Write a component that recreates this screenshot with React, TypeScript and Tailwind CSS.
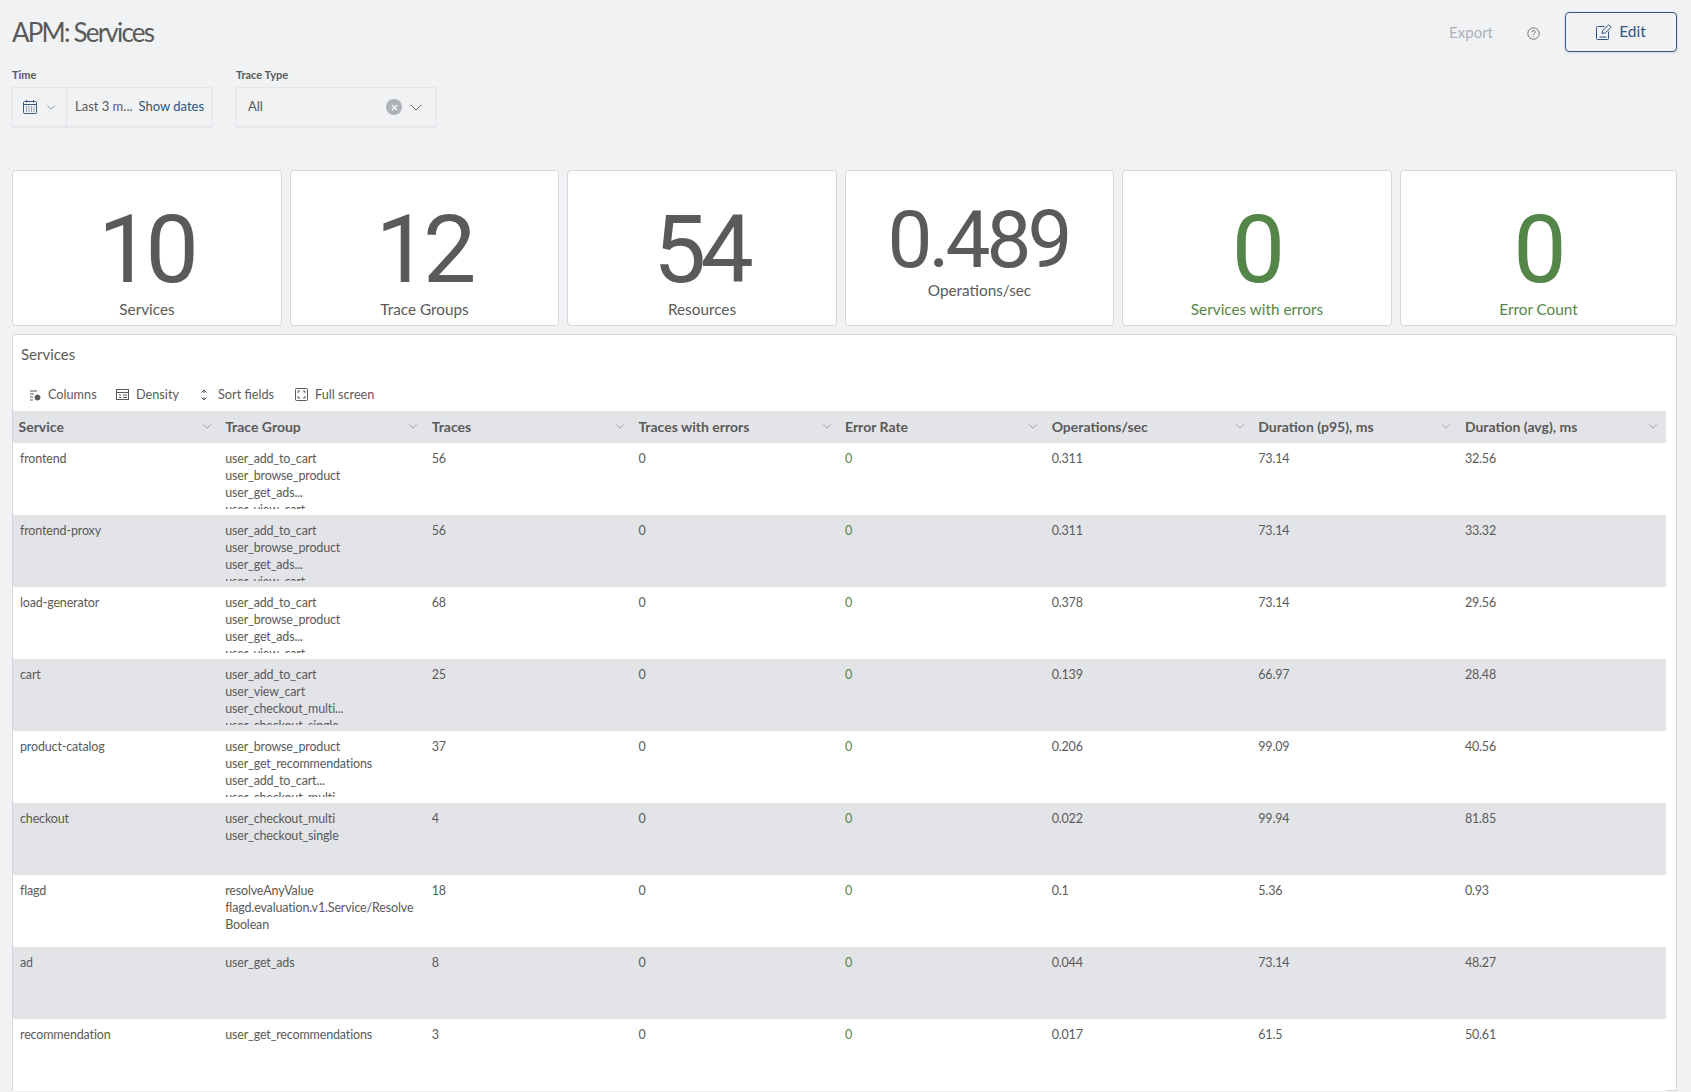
const font = "font-['Lato','Noto_Sans',sans-serif]"

const stats = [
  { value: '10', label: 'Services' },
  { value: '12', label: 'Trace Groups' },
  { value: '54', label: 'Resources' },
  { value: '0.489', label: 'Operations/sec', small: true },
  { value: '0', label: 'Services with errors', green: true },
  { value: '0', label: 'Error Count', green: true },
]

const columns = ['Service', 'Trace Group', 'Traces', 'Traces with errors', 'Error Rate', 'Operations/sec', 'Duration (p95), ms', 'Duration (avg), ms']

const rows = [
  ['frontend', ['user_add_to_cart', 'user_browse_product', 'user_get_ads...', 'user_view_cart'], '56', '0.311', '73.14', '32.56'],
  ['frontend-proxy', ['user_add_to_cart', 'user_browse_product', 'user_get_ads...', 'user_view_cart'], '56', '0.311', '73.14', '33.32'],
  ['load-generator', ['user_add_to_cart', 'user_browse_product', 'user_get_ads...', 'user_view_cart'], '68', '0.378', '73.14', '29.56'],
  ['cart', ['user_add_to_cart', 'user_view_cart', 'user_checkout_multi...', 'user_checkout_single'], '25', '0.139', '66.97', '28.48'],
  ['product-catalog', ['user_browse_product', 'user_get_recommendations', 'user_add_to_cart...', 'user_checkout_multi'], '37', '0.206', '99.09', '40.56'],
  ['checkout', ['user_checkout_multi', 'user_checkout_single'], '4', '0.022', '99.94', '81.85'],
  ['flagd', ['resolveAnyValue', 'flagd.evaluation.v1.Service/Resolve', 'Boolean'], '18', '0.1', '5.36', '0.93'],
  ['ad', ['user_get_ads'], '8', '0.044', '73.14', '48.27'],
  ['recommendation', ['user_get_recommendations'], '3', '0.017', '61.5', '50.61'],
] as const

function Chevron({ className }: { className: string }) {
  return (
    <svg viewBox="0 0 16 16" fill="none" stroke="currentColor" strokeWidth="1" className={className}>
      <path d="M2 5.5l6 6 6-6" />
    </svg>
  )
}

function Header() {
  return (
    <div className="flex items-start justify-between h-[127px]">
      <div>
        <h1 className="text-[26px] leading-[32px] mt-[16px] text-[#5a5a5a] tracking-[-1.8px]">APM: Services</h1>
        <div className="flex gap-[24px] mt-[20px]">
          <div>
            <div className="text-[11px] leading-[14px] font-bold text-[#5a5a5a] mb-[5px]">Time</div>
            <div className="flex items-center w-[200px] h-[40px] border border-[#e3e5ea] shadow-[0_1px_2px_rgba(0,0,0,0.06)] text-[13px]">
              <div className="flex items-center gap-[8px] h-full w-[54px] pl-[9px] border-r border-[#e3e5ea] text-[#3c5a80]">
                <svg viewBox="0 0 16 16" fill="none" stroke="currentColor" strokeWidth="1" className="w-[16px] h-[16px]">
                  <rect x="1.5" y="2.5" width="13" height="12" rx="1" />
                  <path d="M1.5 5.5h13M4.5 1v2.500M11.500 1v2.500" />
                  <path d="M4 8h1M6.500 8h1M9 8h1M11.500 8h1M4 10h1M6.500 10h1M9 10h1M11.500 10h1M4 12h1M6.500 12h1M9 12h1M11.500 12h1" strokeWidth="1.200" />
                </svg>
                <Chevron className="w-[10px] h-[10px]" />
              </div>
              <span className="ml-[8px] text-[#5a5a5a]">Last 3 m...</span>
              <span className="ml-[6px] text-[#2f5580]">Show dates</span>
            </div>
          </div>
          <div>
            <div className="text-[11px] leading-[14px] font-bold text-[#5a5a5a] mb-[5px]">Trace Type</div>
            <div className="flex items-center w-[200px] h-[40px] pl-[11px] pr-[12px] border border-[#e3e5ea] shadow-[0_1px_2px_rgba(0,0,0,0.06)] text-[13px] text-[#5a5a5a]">
              <span className="flex-1">All</span>
              <span className="flex items-center justify-center w-[16px] h-[16px] rounded-full bg-[#aeb2b8] mr-[7px]">
                <svg viewBox="0 0 8 8" fill="none" stroke="white" strokeWidth="1.600" className="w-[7px] h-[7px]">
                  <path d="M1 1l6 6M7 1L1 7" />
                </svg>
              </span>
              <Chevron className="w-[14px] h-[14px] text-[#4a4f55]" />
            </div>
          </div>
        </div>
      </div>
      <div className="flex items-center mt-[12px]">
        <span className="text-[15px] text-[#aeb2b8]">Export</span>
        <svg viewBox="0 0 16 16" fill="none" stroke="#5a5a5a" strokeWidth="1" className="w-[13px] h-[13px] ml-[34px] mt-[2px]">
          <circle cx="8" cy="8" r="7" />
          <path d="M6 6.300a2 2 0 1 1 3 1.700c-.7.400-1 .800-1 1.600M8 11.200v1" />
        </svg>
        <button className="flex items-center justify-center gap-[7px] w-[112px] h-[40px] ml-[25px] border border-[#2f5580] rounded-[4px] text-[15.500px] text-[#2f5580] shadow-[0_1px_3px_rgba(0,0,0,0.12)]">
          <svg viewBox="0 0 16 17" fill="none" stroke="currentColor" strokeWidth="1" className="w-[16px] h-[17px]">
            <path d="M8.500 2.500H1.500a1 1 0 0 0-1 1v11a1 1 0 0 0 1 1h10a1 1 0 0 0 1-1V7.500" />
            <path d="M6 9.500l.7-3L12.700.800l2.500 2.400-5.900 5.600zM3.500 13h7" />
          </svg>
          Edit
        </button>
      </div>
    </div>
  )
}

function StatCards() {
  return (
    <div className="grid grid-cols-[270px_269px_270px_269px_270px_277px] gap-[8px] mt-[43px]">
      {stats.map((s) => (
        <div key={s.label} className={`flex flex-col items-center h-[156px] bg-white border border-[#d3d6dc] rounded-[4px] ${s.green ? 'text-[#54864a]' : 'text-[#5a5a5a]'}`}>
          {s.small ? (
            <div className="font-['Roboto',sans-serif] text-[80px] leading-[80px] font-[450] tracking-[-4px] mt-[29px] h-[80px] mr-[3px]">{s.value}</div>
          ) : (
            <div className="font-['Roboto',sans-serif] text-[95px] leading-[95px] font-[450] tracking-[-6px] mt-[31px] h-[97px] mr-[3px]">{s.value}</div>
          )}
          <div className="text-[15.300px] leading-[20px]">{s.label}</div>
        </div>
      ))}
    </div>
  )
}

function ToolbarItem({ icon, label, className }: { icon: React.ReactNode; label: string; className: string }) {
  return (
    <div className={`flex items-center ${className}`}>
      {icon}
      <span>{label}</span>
    </div>
  )
}

function Toolbar() {
  return (
    <div className="flex items-center h-[26px] pl-[16px] mt-[18px] mb-[3px] text-[12.700px] text-[#5a5a5a]">
      <ToolbarItem
        className="w-[87px]"
        label="Columns"
        icon={
          <svg viewBox="0 0 12 12" className="w-[12px] h-[12px] mr-[7px]" fill="none" stroke="currentColor" strokeWidth="1">
            <path d="M1 2h7M1 5h4M1 8h3M1 11h3" />
            <circle cx="8.500" cy="8.500" r="2.500" fill="currentColor" />
          </svg>
        }
      />
      <ToolbarItem
        className="w-[83px]"
        label="Density"
        icon={
          <svg viewBox="0 0 13 13" className="w-[13px] h-[13px] mr-[7px]" fill="none" stroke="currentColor" strokeWidth="1">
            <rect x="0.500" y="1.500" width="12" height="10" />
            <path d="M0.500 4.500h12M3 7h2M3 9.500h2M7 7h4M7 9.500h4" />
          </svg>
        }
      />
      <ToolbarItem
        className="w-[96px]"
        label="Sort fields"
        icon={
          <svg viewBox="0 0 10 12" className="w-[10px] h-[12px] mr-[9px]" fill="none" stroke="currentColor" strokeWidth="1">
            <path d="M2.500 3.500L5 1l2.500 2.500M2.500 8.500L5 11l2.500-2.500M5 1v3M5 8v3" />
          </svg>
        }
      />
      <ToolbarItem
        className="w-[100px]"
        label="Full screen"
        icon={
          <svg viewBox="0 0 13 13" className="w-[13px] h-[13px] mr-[7px]" fill="none" stroke="currentColor" strokeWidth="1">
            <rect x="0.500" y="0.500" width="12" height="12" rx="1" />
            <path d="M3 5V3h2M10 5V3H8M3 8v2h2M10 8v2H8" />
          </svg>
        }
      />
    </div>
  )
}

function ServicesTable() {
  return (
    <div className="w-[1653px] text-[#5a5a5a]">
      <div className="grid grid-cols-8 h-[32px] pb-[2px] bg-[#e3e4e8]">
        {columns.map((c) => (
          <div key={c} className="flex items-center justify-between pl-[5.500px] pr-[8px] text-[14px] font-bold">
            <span>{c}</span>
            <Chevron className="w-[10px] h-[10px] text-[#7a7a7a]" />
          </div>
        ))}
      </div>
      {rows.map((r, i) => (
        <div key={r[0]} className={`grid grid-cols-8 h-[72px] text-[12.500px] tracking-[-0.15px] leading-[17px] ${i % 2 === 1 ? 'bg-[#e3e4e8]' : 'bg-white'}`}>
          <div className="pl-[7px] pt-[7px]">{r[0]}</div>
          <div className="pl-[5.500px] pt-[7px]">
            <div className="h-[59px] overflow-hidden whitespace-nowrap">
              {r[1].map((t) => (
                <div key={t}>{t}</div>
              ))}
            </div>
          </div>
          <div className="pl-[5.500px] pt-[7px]">{r[2]}</div>
          <div className="pl-[5.500px] pt-[7px]">0</div>
          <div className="pl-[5.500px] pt-[7px] text-[#54864a]">0</div>
          <div className="pl-[5.500px] pt-[7px]">{r[3]}</div>
          <div className="pl-[5.500px] pt-[7px]">{r[4]}</div>
          <div className="pl-[5.500px] pt-[7px]">{r[5]}</div>
        </div>
      ))}
    </div>
  )
}

export default function App() {
  return (
    <div className={`w-[1691px] h-[1092px] overflow-hidden bg-[#f0f2f4] pl-[12px] pr-[14px] ${font}`}>
      <Header />
      <StatCards />
      <div className="mt-[8px] h-[757px] bg-white border border-[#d3d6dc] rounded-t-[4px]">
        <div className="pl-[8px] pt-[9px] text-[15px] leading-[20px] text-[#5a5a5a]">Services</div>
        <Toolbar />
        <ServicesTable />
      </div>
    </div>
  )
}
